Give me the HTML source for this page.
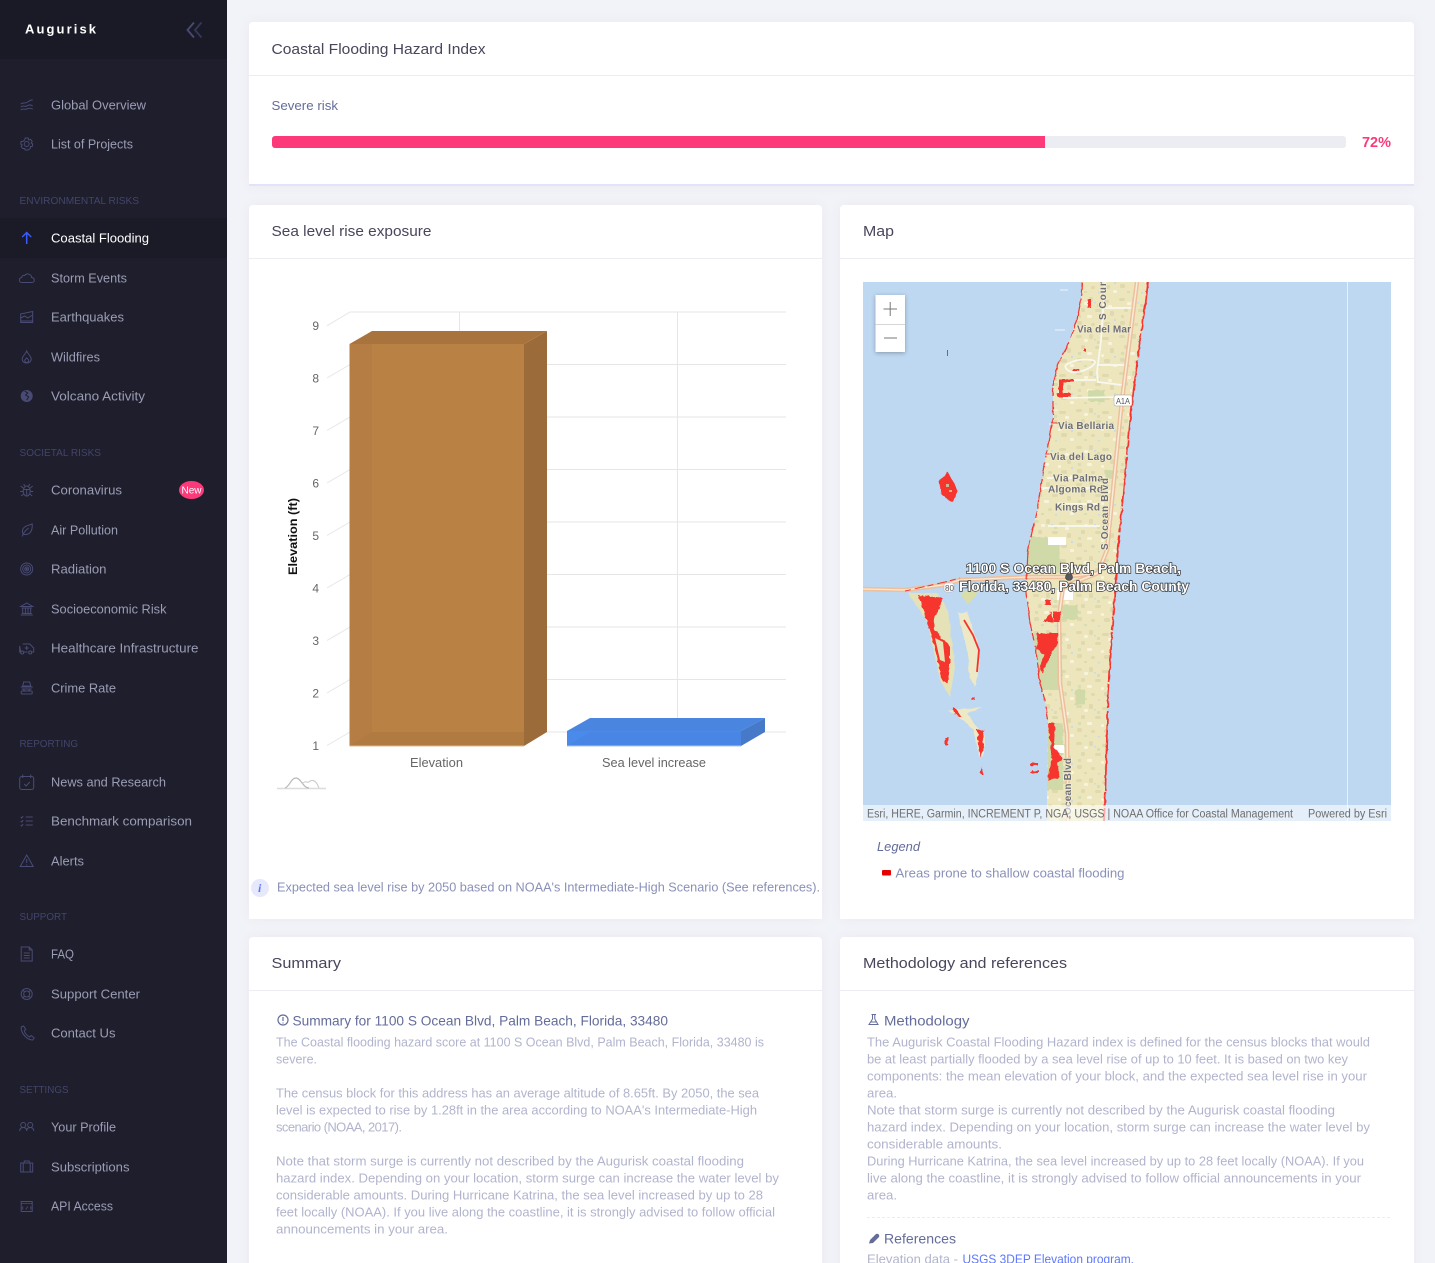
<!DOCTYPE html>
<html lang="en"><head><meta charset="utf-8"><title>Augurisk - Coastal Flooding</title>
<style>
html,body{margin:0;padding:0;background:#f2f3f8}
#page{position:relative;width:1435px;height:1263px;overflow:hidden;font-family:"Liberation Sans",sans-serif}
aside{position:absolute;left:0;top:0;width:227px;height:1263px;background:#1e1e2d}
aside .brand{height:59px;background:#1a1a27}
aside .active{position:absolute;left:0;top:218px;width:227px;height:40px;background:#1b1b28}
section{position:absolute;background:#fff;box-shadow:0 0 13px rgba(82,63,105,.05);border-radius:4px 4px 0 0}
section .hd{height:53px;border-bottom:1px solid #ebedf2}
.c1{left:249px;top:22px;width:1165px;height:162px;border-bottom:2px solid #dfe4fb}
.c2{left:249px;top:205px;width:573px;height:714px}
.c3{left:840px;top:205px;width:574px;height:714px}
.c4{left:249px;top:937px;width:573px;height:340px}
.c5{left:840px;top:937px;width:574px;height:340px}
svg.o{position:absolute;left:0;top:0}
svg text{font-family:"Liberation Sans",sans-serif}
.m text{font-size:13px;fill:#9b9db4}
.s text{font-size:10.5px;fill:#43456a}
.ic{fill:none;stroke:#494b74;stroke-width:1}
.t{font-size:14.5px;fill:#48465b}
.b{font-size:13px;fill:#b1b4cd}
.h{font-size:14px;fill:#646c9a}
.l{font-size:10px;fill:#6e6e78;font-weight:bold;paint-order:stroke;stroke:#f3eecf;stroke-width:1.4}
</style></head><body>
<div id="page">
<aside><div class="brand"></div><div class="active"></div></aside>
<section class="c1"><div class="hd"></div></section>
<section class="c2"><div class="hd"></div></section>
<section class="c3"><div class="hd"></div></section>
<section class="c4"><div class="hd"></div></section>
<section class="c5"><div class="hd"></div></section>

<svg class="o" width="1435" height="1263" viewBox="0 0 1435 1263" xmlns="http://www.w3.org/2000/svg">
<defs>
<clipPath id="mapc"><rect x="863" y="282" width="528" height="539"/></clipPath>
<clipPath id="landc"><path d="M1082 282L1081 300L1077 320L1070 340L1058 365L1053 385L1053 420L1047 450L1042 480L1037 510L1028 550L1026 593L1030 623L1036 650L1040 683L1045 700L1048 720L1047 783L1047 821L1105 821L1105 803L1108 700L1112 633L1118 550L1122 507L1127 453L1132 403L1140 340L1146 300L1148 282Z"/></clipPath>
<pattern id="tex" width="43" height="37" patternUnits="userSpaceOnUse">
<g fill="#dfd9b0"><rect x="1" y="2" width="6" height="3" rx="1.500"/><rect x="14" y="1" width="4" height="5" rx="1.500"/><rect x="27" y="4" width="7" height="3" rx="1.500"/><rect x="6" y="12" width="4" height="4" rx="1.500"/><rect x="20" y="13" width="6" height="3" rx="1.500"/><rect x="35" y="15" width="4" height="5" rx="1.500"/><rect x="2" y="25" width="5" height="4" rx="1.500"/><rect x="16" y="27" width="4" height="3" rx="1.500"/><rect x="29" y="26" width="6" height="4" rx="1.500"/></g>
<g fill="#f7f3dc"><rect x="9" y="6" width="4" height="3" rx="1"/><rect x="33" y="9" width="4" height="3" rx="1"/><rect x="12" y="19" width="5" height="3" rx="1"/><rect x="26" y="21" width="3" height="3" rx="1"/><rect x="38" y="31" width="4" height="3" rx="1"/></g>
<g fill="#d8deb2"><rect x="22" y="8" width="3" height="3"/><rect x="3" y="19" width="3" height="3"/><rect x="9" y="32" width="3" height="2"/></g>
<g fill="#c5dde6"><rect x="19" y="6" width="2" height="1.500"/><rect x="39" y="23" width="2" height="2"/><rect x="23" y="33" width="2" height="1.500"/></g>
</pattern>
<filter id="rough" x="-10%" y="-10%" width="120%" height="120%"><feTurbulence type="fractalNoise" baseFrequency=".22" numOctaves="2" seed="3"/><feDisplacementMap in="SourceGraphic" scale="4" xChannelSelector="R" yChannelSelector="G"/></filter>
<filter id="rough2" x="-10%" y="-10%" width="120%" height="120%"><feTurbulence type="fractalNoise" baseFrequency=".15" numOctaves="2" seed="8"/><feDisplacementMap in="SourceGraphic" scale="2.500" xChannelSelector="R" yChannelSelector="G"/></filter>
</defs>

<!-- sidebar -->
<text x="25" y="33.500" font-size="13" font-weight="bold" fill="#fff" textLength="71" lengthAdjust="spacing">Augurisk</text>
<path d="M194 22.500L187.500 30L194 37.500" fill="none" stroke="#494b74" stroke-width="1.800"/>
<path d="M201.500 22.500L195 30L201.500 37.500" fill="none" stroke="#35375a" stroke-width="1.800"/>

<g class="m">
<text x="51" y="109.300" textLength="95" lengthAdjust="spacingAndGlyphs">Global Overview</text>
<text x="51" y="148.300" textLength="82" lengthAdjust="spacingAndGlyphs">List of Projects</text>
<text x="51" y="242.300" textLength="98" lengthAdjust="spacingAndGlyphs" style="fill:#fff">Coastal Flooding</text>
<text x="51" y="282.300" textLength="76" lengthAdjust="spacingAndGlyphs">Storm Events</text>
<text x="51" y="321.300" textLength="73" lengthAdjust="spacingAndGlyphs">Earthquakes</text>
<text x="51" y="361.300" textLength="49" lengthAdjust="spacingAndGlyphs">Wildfires</text>
<text x="51" y="400.300" textLength="94" lengthAdjust="spacingAndGlyphs">Volcano Activity</text>
<text x="51" y="494.300" textLength="71" lengthAdjust="spacingAndGlyphs">Coronavirus</text>
<text x="51" y="534.300" textLength="67" lengthAdjust="spacingAndGlyphs">Air Pollution</text>
<text x="51" y="573.300" textLength="55.500" lengthAdjust="spacingAndGlyphs">Radiation</text>
<text x="51" y="613.300" textLength="115.500" lengthAdjust="spacingAndGlyphs">Socioeconomic Risk</text>
<text x="51" y="652.300" textLength="147.500" lengthAdjust="spacingAndGlyphs">Healthcare Infrastructure</text>
<text x="51" y="692.300" textLength="65" lengthAdjust="spacingAndGlyphs">Crime Rate</text>
<text x="51" y="786.300" textLength="115" lengthAdjust="spacingAndGlyphs">News and Research</text>
<text x="51" y="825.300" textLength="141" lengthAdjust="spacingAndGlyphs">Benchmark comparison</text>
<text x="51" y="865.300" textLength="33" lengthAdjust="spacingAndGlyphs">Alerts</text>
<text x="51" y="958.300" textLength="23" lengthAdjust="spacingAndGlyphs">FAQ</text>
<text x="51" y="998.300" textLength="89" lengthAdjust="spacingAndGlyphs">Support Center</text>
<text x="51" y="1037.300" textLength="64.500" lengthAdjust="spacingAndGlyphs">Contact Us</text>
<text x="51" y="1131.300" textLength="65" lengthAdjust="spacingAndGlyphs">Your Profile</text>
<text x="51" y="1171.300" textLength="78.500" lengthAdjust="spacingAndGlyphs">Subscriptions</text>
<text x="51" y="1210.300" textLength="62" lengthAdjust="spacingAndGlyphs">API Access</text>
</g>
<g class="s">
<text x="19.500" y="204" textLength="119.500" lengthAdjust="spacingAndGlyphs">ENVIRONMENTAL RISKS</text>
<text x="19.500" y="456" textLength="81.500" lengthAdjust="spacingAndGlyphs">SOCIETAL RISKS</text>
<text x="19.500" y="747" textLength="58.500" lengthAdjust="spacingAndGlyphs">REPORTING</text>
<text x="19.500" y="920" textLength="47.500" lengthAdjust="spacingAndGlyphs">SUPPORT</text>
<text x="19.500" y="1093" textLength="49" lengthAdjust="spacingAndGlyphs">SETTINGS</text>
</g>

<g class="ic">
<g transform="translate(26.700,105)"><path d="M-6 -1C-3 -3 -2 -1 1 -3S4 -5 6 -5M-6 2C-4 0 -2 2 0 1S3 -1 6 1M-6 5C-4 3 -2 5 0 4S3 3 6 4"/></g>
<g transform="translate(26.700,144)"><circle r="2.500"/><path d="M-1.500 -6H1.500L2 -4L4 -4.500L5.500 -2.500L4.500 -1L6 0L5.500 2.500L4 2.500L3.500 4.500L1.500 6H-1.500L-2 4.500L-4 4.500L-5.500 2.500L-4.500 1L-6 0L-5.500 -2.500L-4 -2.500L-2 -4Z"/></g>
<g transform="translate(26.700,238)"><path d="M0 6V-5.500M-4.500 -1L0 -5.500L4.500 -1" stroke="#3a5cff" stroke-width="1.500"/></g>
<g transform="translate(26.700,278)"><path d="M-5 4.500H5C8.500 4.500 8.500 0 5 -.5C4.500 -4 0 -5.500 -2 -2.500C-4.500 -3 -5 -1 -5 -.5C-8 0 -8 4.500 -5 4.500Z"/></g>
<g transform="translate(26.700,317)"><path d="M-6 -3L6 -5.500V5.500H-6ZM-6 1L-2 -1L1 1L6 -2M-6 4H6"/></g>
<g transform="translate(26.700,357)"><path d="M0 -6C1 -3 4.500 -1 4.500 2C4.500 4.500 2.500 6 0 6S-4.500 4.500 -4.500 2C-4.500 -1 -1 -3 0 -6ZM0 1C1 2 2 2.500 2 3.500S1 5.500 0 5.500S-2 4.500 -2 3.500S-1 2 0 1Z"/></g>
<g transform="translate(26.700,396)"><circle r="5.500" fill="#494b74"/><path d="M-2 -5L1 -3L-1 -1L2 1L0 4" stroke="#1e1e2d"/></g>
<g transform="translate(26.700,490)"><ellipse cy="1" rx="3.500" ry="5"/><path d="M-3.500 -.5H3.500M0 -.5V6M-3.500 -2L-6 -4M3.500 -2L6 -4M-3.500 1.500H-6.500M3.500 1.500H6.500M-3 4L-5.500 6M3 4L5.500 6M-2 -4L-3 -6M2 -4L3 -6"/></g>
<g transform="translate(26.700,530)"><path d="M5.500 -6C6 1 3 5 -2 4.500C-5 4 -5 -1 -2 -3C0 -4.500 3 -5 5.500 -6ZM-4.500 6.500C-3 2 -1 0 2 -2"/></g>
<g transform="translate(26.700,569)"><circle r="6"/><circle r="4"/><circle r="2"/><circle r=".7" fill="#494b74"/></g>
<g transform="translate(26.700,609)"><path d="M-6 -2.500L0 -6L6 -2.500ZM-5 -1H5M-4 -1V4M-1.300 -1V4M1.300 -1V4M4 -1V4M-5 4.500H5M-6 6H6"/></g>
<g transform="translate(26.700,648)"><path d="M-4 -4H3L7 0V4H5.500M1 4H-3M-6 4H-7V-2ZM0 -2V2M-2 0H2"/><circle cx="-4.500" cy="4.500" r="1.500"/><circle cx="3.500" cy="4.500" r="1.500"/></g>
<g transform="translate(26.700,688)"><path d="M-4 -2L-3 -6H3L4 -2ZM-6 -1H6M-5 1H5M-3 1.500C-3 3.500 3 3.500 3 1.500"/><rect x="-5.500" y="3" width="11" height="3" rx="1"/></g>
<g transform="translate(26.700,782)"><rect x="-7" y="-5.500" width="14" height="13" rx="2"/><path d="M-4 -7.500V-4M4 -7.500V-4M-2.500 2L-.500 4L3 0"/></g>
<g transform="translate(26.700,821)"><path d="M-1 -4H6M-1 0H6M-1 4H6M-6 -4L-5 -3L-3.500 -5M-6 0L-5 1L-3.500 -1M-6 4L-5 5L-3.500 3"/></g>
<g transform="translate(26.700,861)"><path d="M0 -6L6.500 5.500H-6.500ZM0 -2V2M0 3.500V4.500"/></g>
<g transform="translate(26.700,954)"><path d="M-5.500 -7H2.500L5.500 -4V7H-5.500ZM2.500 -7V-4H5.500M-3 -1H3M-3 1.500H3M-3 4H3"/></g>
<g transform="translate(26.700,994)"><circle r="5.500"/><circle r="3"/><path d="M-4 -4L-2 -2M4 -4L2 -2M-4 4L-2 2M4 4L2 2"/></g>
<g transform="translate(26.700,1033)"><path d="M-5.500 -6L-3 -7L-1 -3.500L-2.500 -2C-1.500 1 1 3 3 4L4.500 2.500L7.500 5L6 7C1 7 -6 1 -5.500 -6Z"/></g>
<g transform="translate(26.700,1127)"><circle cx="-3.500" cy="-2" r="2.500"/><circle cx="3.500" cy="-2" r="2.500"/><path d="M-7 4C-7 1 -5 .5 -3.500 .5S0 1 0 4M0 4C0 1 2 .5 3.500 .5S7 1 7 4"/></g>
<g transform="translate(26.700,1167)"><rect x="-6" y="-4" width="12" height="9"/><path d="M-2.500 -4V-6H2.500V-4M-3.500 -4V5M3.500 -4V5"/></g>
<g transform="translate(26.700,1206)"><rect x="-5.500" y="-4.500" width="11" height="10"/><path d="M-5.500 -2.500H5.500M-3.500 .5L-4.500 2L-3.500 3.500M3.500 .5L4.500 2L3.500 3.500M1 .5L-1 3.500" stroke-width=".8"/></g>
</g>
<ellipse cx="191.500" cy="490" rx="12.500" ry="9" fill="#fd397a"/>
<text x="181.500" y="493.500" font-size="10" fill="#fff" textLength="20" lengthAdjust="spacingAndGlyphs">New</text>

<!-- hazard card -->
<text class="t" x="271.500" y="54" textLength="214" lengthAdjust="spacingAndGlyphs">Coastal Flooding Hazard Index</text>
<text x="271.500" y="110" font-size="13" fill="#646c9a" textLength="66.500" lengthAdjust="spacingAndGlyphs">Severe risk</text>
<rect x="272" y="136" width="1074" height="12" rx="3" fill="#ebedf2"/>
<path d="M275 136H1045V148H275A3 3 0 0 1 272 145V139A3 3 0 0 1 275 136Z" fill="#fd397a"/>
<text x="1362" y="147" font-size="14.500" font-weight="bold" fill="#fd397a" textLength="29" lengthAdjust="spacingAndGlyphs">72%</text>

<!-- chart card -->
<text class="t" x="271.500" y="236" textLength="160" lengthAdjust="spacingAndGlyphs">Sea level rise exposure</text>
<g stroke="#e6e6e6" fill="none">
<path d="M350 312H786M350 364.500H786M350 417H786M350 469.500H786M350 522H786M350 574.500H786M350 627H786M350 679.500H786M350 732H786M459.500 312V732M677.500 312V732"/>
<path d="M327 325.700L350 312M327 378L350 364.500M327 430.500L350 417M327 483L350 469.500M327 535.500L350 522M327 588L350 574.500M327 640.500L350 627M327 693L350 679.500M327 745.500L350 732"/>
</g>
<g font-size="12" fill="#666" text-anchor="end">
<text x="319" y="330">9</text><text x="319" y="382.500">8</text><text x="319" y="435">7</text><text x="319" y="487.500">6</text><text x="319" y="540">5</text><text x="319" y="592.500">4</text><text x="319" y="645">3</text><text x="319" y="697.500">2</text><text x="319" y="750">1</text>
</g>
<path d="M349.500 344L372 331H547L524 344Z" fill="#a9733d"/>
<path d="M524 344L547 331V732L524 746Z" fill="#9c6b3a"/>
<rect x="349.500" y="344" width="174.500" height="402" fill="#ba8145"/>
<rect x="349.500" y="344" width="22.500" height="402" fill="#b57d43"/>
<path d="M349.500 746L372 732H524V746Z" fill="#b07a41"/>
<path d="M349.500 746H524" stroke="#d9b896"/>
<path d="M567 731L590 718H765L741 731Z" fill="#4a85e0"/>
<path d="M741 731L765 718V732L741 746Z" fill="#4679c8"/>
<rect x="567" y="731" width="174" height="15" fill="#4a8aea"/>
<path d="M567 746L590 732H741V746Z" fill="#4985e4"/>
<path d="M567 746H741" stroke="#a9c5ef"/>
<text x="410" y="767" font-size="12.500" fill="#666" textLength="53" lengthAdjust="spacingAndGlyphs">Elevation</text>
<text x="602" y="767" font-size="12.500" fill="#666" textLength="104" lengthAdjust="spacingAndGlyphs">Sea level increase</text>
<text transform="translate(297,575) rotate(-90)" font-size="12" font-weight="bold" fill="#111" textLength="77" lengthAdjust="spacingAndGlyphs">Elevation (ft)</text>
<path d="M277 788.500H326" stroke="#dcdcdc" stroke-width="1.500"/>
<path d="M285 788C290 786 291 778 296 778C301 778 303 788 309 788" fill="none" stroke="#b8b8b8" stroke-width="1.200"/>
<path d="M302 784C305 780 307 783 309 782C312 779 316 780 319 788" fill="none" stroke="#c8c8c8" stroke-width="1"/>
<circle cx="260" cy="888" r="9" fill="#e6e8fb"/>
<text x="258" y="892" font-size="12" font-weight="bold" font-style="italic" fill="#5d78ff" style="font-family:'Liberation Serif',serif">i</text>
<text x="277" y="891.500" font-size="13" fill="#8a90b8" textLength="543" lengthAdjust="spacingAndGlyphs">Expected sea level rise by 2050 based on NOAA's Intermediate-High Scenario (See references).</text>

<!-- map card -->
<text class="t" x="863" y="236" textLength="31" lengthAdjust="spacingAndGlyphs">Map</text>
<g clip-path="url(#mapc)">
<rect x="863" y="282" width="528" height="539" fill="#bed8f2"/>
<path d="M1347.500 282V821" stroke="#e8f0f8"/>
<path d="M1082 282L1081 300L1077 320L1070 340L1058 365L1053 385L1053 420L1047 450L1042 480L1037 510L1028 550L1026 593L1030 623L1036 650L1040 683L1045 700L1048 720L1047 783L1047 821L1105 821L1105 803L1108 700L1112 633L1118 550L1122 507L1127 453L1132 403L1140 340L1146 300L1148 282Z" fill="#ede6bc"/>
<g clip-path="url(#landc)">
<rect x="1020" y="282" width="130" height="540" fill="url(#tex)"/>
<g filter="url(#rough)"><path d="M1027 537H1060V573H1027ZM1033 633H1062V690H1033ZM1047 723H1063V790H1047ZM1062 605H1078V620H1062ZM1075 690H1085V705H1075ZM1088 390H1105V402H1088ZM1105 470H1118V478H1105Z" fill="#d0d9a8"/></g>
<path d="M1048 537H1066V545H1048ZM1057 590H1073V600H1057ZM1053 745H1064V753H1053Z" fill="#fff"/>
<path d="M1105 282L1101 340L1097 372M1097 372L1098 382L1122 385M1062 380H1096M1063 398L1118 397M1098 365H1125M1100 308H1135M1070 363C1060 365 1068 374 1078 372S1095 365 1095 362S1078 358 1070 363ZM1048 526H1100M1047 478H1105M1043 488H1105M1055 504H1100" stroke="#f8f8f0" stroke-width="1.800" fill="none"/>
</g>
<path d="M863 589L905 590L943 585L960 580L1027 577L1063 577L1098 573" fill="none" stroke="#eebf9d" stroke-width="4.500"/>
<path d="M1137 282L1122 400L1107 550L1098 573L1063 587L1059 617L1060 683L1067 733L1068 821" fill="none" stroke="#eebf9d" stroke-width="4.500"/>
<path d="M1137 282L1122 400L1107 550L1098 573L1063 587L1059 617L1060 683L1067 733L1068 821" fill="none" stroke="#f8ecd6" stroke-width="1.500"/>
<path d="M863 589L905 590L943 585L960 580L1027 577L1063 577L1098 573" fill="none" stroke="#f8ecd6" stroke-width="1.200"/>

<!-- islands -->
<g filter="url(#rough2)">
<path d="M908 593L937 593L948 610L953 650L955 667L950 697L940 680L935 657L928 623Z" fill="#e6e2b8"/>
<path d="M958 613L967 612L977 640L980 663L975 687L970 677L967 650Z" fill="#ede8c6"/>
<path d="M948 710L983 707L967 713L977 727L985 737L983 757L980 757L973 730L963 720Z" fill="#ede8c6"/>
<path d="M960 593L983 586L968 605Z" fill="#d9dda8"/>
<path d="M939 480C944 478 945 476 947 472C950 478 957 484 957 492C957 497 954 498 953 502L946 498L941 494Z" fill="#f5342f"/>
</g>
<path d="M946 484h3v3h-3ZM949 490h3v2h-3Z" fill="#c9b98f"/>
<!-- red flood -->
<g fill="#f5342f" filter="url(#rough)">
<path d="M918 595L942 597L940 608L933 620L935 630L950 647L950 663L947 683L942 680L937 657L928 623Z"/>
<path d="M1037 633H1058L1057 643L1050 657L1042 673L1040 667L1044 655L1038 650Z"/>
<path d="M1048 723H1055L1054 747L1063 758L1057 763L1060 777L1048 780L1052 757Z"/>
<path d="M1045 600H1051V605H1045ZM1043 622L1051 612L1053 622ZM1053 612H1060V622H1053Z"/>
<path d="M1087 299h4v9h-4ZM1059 379h4v18h-4ZM1059 379h15v3h-15ZM1057 393h14v4h-14ZM1083 349h3v2h-3ZM1073 369h6v2h-6Z"/>
<path d="M954 707L962 717L958 717L952 710ZM977 730H984L983 750L980 757L978 745ZM945 737h3v8h-3ZM971 697h4v3h-4ZM1031 763h6v3h-6ZM1031 771h7v2h-7ZM981 767l2 8h-2Z"/>
</g>
<path d="M947 350h1v6h-1Z" fill="#f5342f"/>
<path d="M935 638L943 642L945 662L940 660Z" fill="#e6e2b8"/>
<path d="M905 591L945 582L960 578" fill="none" stroke="#f5342f" stroke-width="1" stroke-dasharray="6 4 10 3"/>
<path d="M964 620L973 635L979 650L977 672" fill="none" stroke="#f5342f" stroke-width="1.800"/>
<g filter="url(#rough2)">
<path d="M1082 282L1081 300L1077 320L1070 340L1058 365L1053 385L1053 420L1047 450L1042 480L1037 510L1028 550L1026 593L1030 623L1036 650L1040 683L1045 700L1048 720" fill="none" stroke="#f5342f" stroke-width="1.200" stroke-dasharray="14 3 30 2 8 5"/>
<path d="M1148 282L1146 300L1140 340L1132 403L1127 453L1122 507L1118 550L1112 633L1108 700L1105 803L1104 821" fill="none" stroke="#f5342f" stroke-width="1.700" stroke-dasharray="50 2 24 3 80 1 14 2"/>
</g>
<path d="M1053 410h5M1045 455h6M1049 424h7M1068 290h-8M1065 330h-10" stroke="#f0f4f6" stroke-width="1"/>
<path d="M1051 423h8M1045 454h7" stroke="#f5342f" stroke-width="1"/>

<!-- labels -->
<g class="l">
<text x="1077" y="332.500" textLength="54" lengthAdjust="spacing">Via del Mar</text>
<text x="1058" y="429" textLength="56" lengthAdjust="spacing">Via Bellaria</text>
<text x="1050" y="460" textLength="62" lengthAdjust="spacing">Via del Lago</text>
<text x="1053" y="481.500" textLength="50" lengthAdjust="spacing">Via Palma</text>
<text x="1048" y="492.500" textLength="55" lengthAdjust="spacing">Algoma Rd</text>
<text x="1055" y="510.500" textLength="45" lengthAdjust="spacing">Kings Rd</text>
<text transform="translate(1108,550) rotate(-90)" textLength="72" lengthAdjust="spacing">S Ocean Blvd</text>
<text transform="translate(1106,320) rotate(-90)" textLength="40" lengthAdjust="spacing">S Coun</text>
<text transform="translate(1071,815) rotate(-90)" textLength="57" lengthAdjust="spacing">Ocean Blvd</text>
</g>
<rect x="1114" y="395" width="18" height="11" rx="2" fill="#fff" stroke="#999" stroke-width=".5"/>
<text x="1116" y="404" font-size="8.500" fill="#555" textLength="14" lengthAdjust="spacingAndGlyphs">A1A</text>
<rect x="944" y="583" width="10" height="9" rx="2" fill="#fff" stroke="#aaa" stroke-width=".5"/>
<text x="945" y="591" font-size="8" fill="#555">80</text>
<circle cx="1069" cy="577" r="3.500" fill="#55585c" stroke="#333" stroke-width=".6"/>
<g font-size="14" font-weight="bold" fill="#fff" stroke="#3a3a3a" stroke-width="1.500" style="paint-order:stroke">
<text x="966" y="573" textLength="215" lengthAdjust="spacingAndGlyphs">1100 S Ocean Blvd, Palm Beach,</text>
<text x="959" y="591" textLength="230" lengthAdjust="spacingAndGlyphs">Florida, 33480, Palm Beach County</text>
</g>
<rect x="863" y="805" width="528" height="16" fill="#fff" fill-opacity=".58"/>
<text x="867" y="817.500" font-size="11.500" fill="#6e6e6e" textLength="426" lengthAdjust="spacingAndGlyphs">Esri, HERE, Garmin, INCREMENT P, NGA, USGS | NOAA Office for Coastal Management</text>
<text x="1308" y="817.500" font-size="11.500" fill="#6e6e6e" textLength="79" lengthAdjust="spacingAndGlyphs">Powered by Esri</text>
</g>
<!-- zoom control -->
<rect x="875.500" y="295" width="29.500" height="57" fill="#fff" style="filter:drop-shadow(0 1px 2px rgba(0,0,0,.3))"/>
<path d="M875.500 324.500H905" stroke="#d6d6d6"/>
<path d="M883.500 309H897M890.200 302V316M884 338H897" stroke="#777" stroke-width="1"/>
<text x="877" y="851" font-size="13" font-style="italic" fill="#646c9a" textLength="43" lengthAdjust="spacingAndGlyphs">Legend</text>
<rect x="882" y="870" width="9" height="5.500" rx="1" fill="#e60000"/>
<text x="895.500" y="877.500" font-size="13" fill="#8a90b8" textLength="229" lengthAdjust="spacingAndGlyphs">Areas prone to shallow coastal flooding</text>

<!-- summary -->
<text class="t" x="271.500" y="968" textLength="69.500" lengthAdjust="spacingAndGlyphs">Summary</text>
<circle cx="283" cy="1020" r="5" fill="none" stroke="#646c9a" stroke-width="1.200"/>
<path d="M283 1017V1021M283 1022.500V1023.500" stroke="#646c9a" stroke-width="1.200"/>
<text class="h" x="292.500" y="1025.300" textLength="375.500" lengthAdjust="spacingAndGlyphs">Summary for 1100 S Ocean Blvd, Palm Beach, Florida, 33480</text>
<g class="b">
<text x="276" y="1046.500" textLength="488" lengthAdjust="spacingAndGlyphs">The Coastal flooding hazard score at 1100 S Ocean Blvd, Palm Beach, Florida, 33480 is</text>
<text x="276" y="1063.500" textLength="41" lengthAdjust="spacingAndGlyphs">severe.</text>
<text x="276" y="1097.500" textLength="483" lengthAdjust="spacingAndGlyphs">The census block for this address has an average altitude of 8.65ft. By 2050, the sea</text>
<text x="276" y="1114.500" textLength="481" lengthAdjust="spacingAndGlyphs">level is expected to rise by 1.28ft in the area according to NOAA's Intermediate-High</text>
<text x="276" y="1131.500" textLength="126" lengthAdjust="spacing">scenario (NOAA, 2017).</text>
<text x="276" y="1165.500" textLength="468" lengthAdjust="spacingAndGlyphs">Note that storm surge is currently not described by the Augurisk coastal flooding</text>
<text x="276" y="1182.500" textLength="503" lengthAdjust="spacingAndGlyphs">hazard index. Depending on your location, storm surge can increase the water level by</text>
<text x="276" y="1199.500" textLength="487" lengthAdjust="spacingAndGlyphs">considerable amounts. During Hurricane Katrina, the sea level increased by up to 28</text>
<text x="276" y="1216.500" textLength="499" lengthAdjust="spacingAndGlyphs">feet locally (NOAA). If you live along the coastline, it is strongly advised to follow official</text>
<text x="276" y="1233.500" textLength="172" lengthAdjust="spacingAndGlyphs">announcements in your area.</text>
</g>

<!-- methodology -->
<text class="t" x="863" y="968" textLength="204" lengthAdjust="spacingAndGlyphs">Methodology and references</text>
<path d="M871.500 1014.500H876M872.500 1014.500V1019L869 1024.500H878L874.800 1019V1014.500M870.500 1022H877" fill="none" stroke="#646c9a" stroke-width="1"/>
<text class="h" x="884" y="1025.300" textLength="85.500" lengthAdjust="spacingAndGlyphs">Methodology</text>
<g class="b">
<text x="867" y="1046.500" textLength="503" lengthAdjust="spacingAndGlyphs">The Augurisk Coastal Flooding Hazard index is defined for the census blocks that would</text>
<text x="867" y="1063.500" textLength="481" lengthAdjust="spacingAndGlyphs">be at least partially flooded by a sea level rise of up to 10 feet. It is based on two key</text>
<text x="867" y="1080.500" textLength="500" lengthAdjust="spacingAndGlyphs">components: the mean elevation of your block, and the expected sea level rise in your</text>
<text x="867" y="1097.500" textLength="30" lengthAdjust="spacingAndGlyphs">area.</text>
<text x="867" y="1114.500" textLength="468" lengthAdjust="spacingAndGlyphs">Note that storm surge is currently not described by the Augurisk coastal flooding</text>
<text x="867" y="1131.500" textLength="503" lengthAdjust="spacingAndGlyphs">hazard index. Depending on your location, storm surge can increase the water level by</text>
<text x="867" y="1148.500" textLength="135" lengthAdjust="spacingAndGlyphs">considerable amounts.</text>
<text x="867" y="1165.500" textLength="497" lengthAdjust="spacingAndGlyphs">During Hurricane Katrina, the sea level increased by up to 28 feet locally (NOAA). If you</text>
<text x="867" y="1182.500" textLength="494" lengthAdjust="spacingAndGlyphs">live along the coastline, it is strongly advised to follow official announcements in your</text>
<text x="867" y="1199.500" textLength="30" lengthAdjust="spacingAndGlyphs">area.</text>
</g>
<path d="M867 1217.500H1391" stroke="#ebedf2" stroke-dasharray="3 2"/>
<path d="M869 1243.500L870 1240L876 1234C878 1233 880 1235 879 1237L873 1243Z" fill="#646c9a"/>
<text class="h" x="884" y="1243.300" textLength="72" lengthAdjust="spacingAndGlyphs">References</text>
<text class="b" x="867" y="1263.500" textLength="91" lengthAdjust="spacingAndGlyphs">Elevation data -</text>
<text x="962.500" y="1263.500" font-size="13" fill="#5d78ff" textLength="171.500" lengthAdjust="spacingAndGlyphs">USGS 3DEP Elevation program.</text>
</svg>
</div>
</body></html>
